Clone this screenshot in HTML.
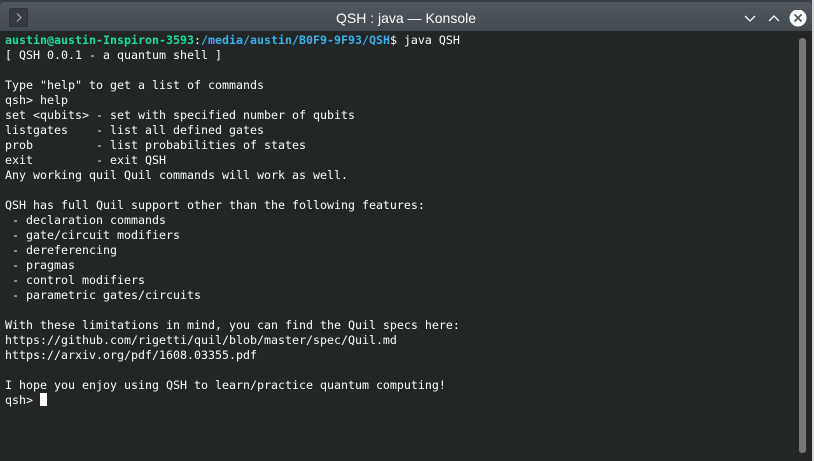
<!DOCTYPE html>
<html><head><style>
html,body{margin:0;padding:0;width:814px;height:461px;overflow:hidden;background:#232627}
#top{position:absolute;left:0;top:0;width:814px;height:3px;background:#3a3f44}
#tb{position:absolute;left:0;top:2px;width:812px;height:29px;background:linear-gradient(#505860,#434a50);border-radius:3px 3px 0 0}
#title{position:absolute;left:0;right:0;top:8px;text-align:center;color:#fcfcfc;font:14px "Liberation Sans","DejaVu Sans",sans-serif}
#menu{position:absolute;left:9px;top:6px;width:17px;height:17px;background:#353b40;border:1px solid #2d3236;border-radius:2px}
#term{position:absolute;left:0;top:31px;width:812px;height:430px;background:#232627}
pre{margin:0;position:absolute;left:5px;top:2px;font-family:"DejaVu Sans Mono",monospace;font-size:11.63px;line-height:15px;color:#fcfcfc}
.g{color:#1cdc9a;font-weight:bold}.b{color:#3daee9;font-weight:bold}
#sb{position:absolute;left:799px;top:38px;width:7px;height:415px;background:#767676;border-radius:3px}
#cur{display:inline-block;width:7px;height:13px;background:#fcfcfc;vertical-align:-2px}
#edge{position:absolute;left:812px;top:0;width:2px;height:461px;background:#d8d8d8}
</style></head><body>
<div id="term"><pre><span class="g">austin@austin-Inspiron-3593</span>:<span class="b">/media/austin/B0F9-9F93/QSH</span>$ java QSH
[ QSH 0.0.1 - a quantum shell ]

Type "help" to get a list of commands
qsh&gt; help
set &lt;qubits&gt; - set with specified number of qubits
listgates    - list all defined gates
prob         - list probabilities of states
exit         - exit QSH
Any working quil Quil commands will work as well.

QSH has full Quil support other than the following features:
 - declaration commands
 - gate/circuit modifiers
 - dereferencing
 - pragmas
 - control modifiers
 - parametric gates/circuits

With these limitations in mind, you can find the Quil specs here:
https://github.com/rigetti/quil/blob/master/spec/Quil.md
https://arxiv.org/pdf/1608.03355.pdf

I hope you enjoy using QSH to learn/practice quantum computing!
qsh&gt; <span id="cur"></span></pre></div>
<div id="top"></div>
<div id="tb">
<div id="menu"><svg width="17" height="17"><path d="M7 4.5L11 8.5L7 12.5" stroke="#aeb3b7" fill="none" stroke-width="1"/></svg></div>
<div id="title">QSH : java — Konsole</div>
<svg style="position:absolute;left:740px;top:8px" width="70" height="18">
<path d="M5 6L10 11L15 6" stroke="#fcfcfc" fill="none" stroke-width="1.3"/>
<path d="M29 11L34 6L39 11" stroke="#fcfcfc" fill="none" stroke-width="1.3"/>
<circle cx="58" cy="8" r="8.5" fill="#fcfcfc"/>
<path d="M54.5 4.5L61.5 11.5M61.5 4.5L54.5 11.5" stroke="#474e54" stroke-width="1.6"/>
</svg>
</div>
<div id="sb"></div>
<div id="edge"></div>
</body></html>
